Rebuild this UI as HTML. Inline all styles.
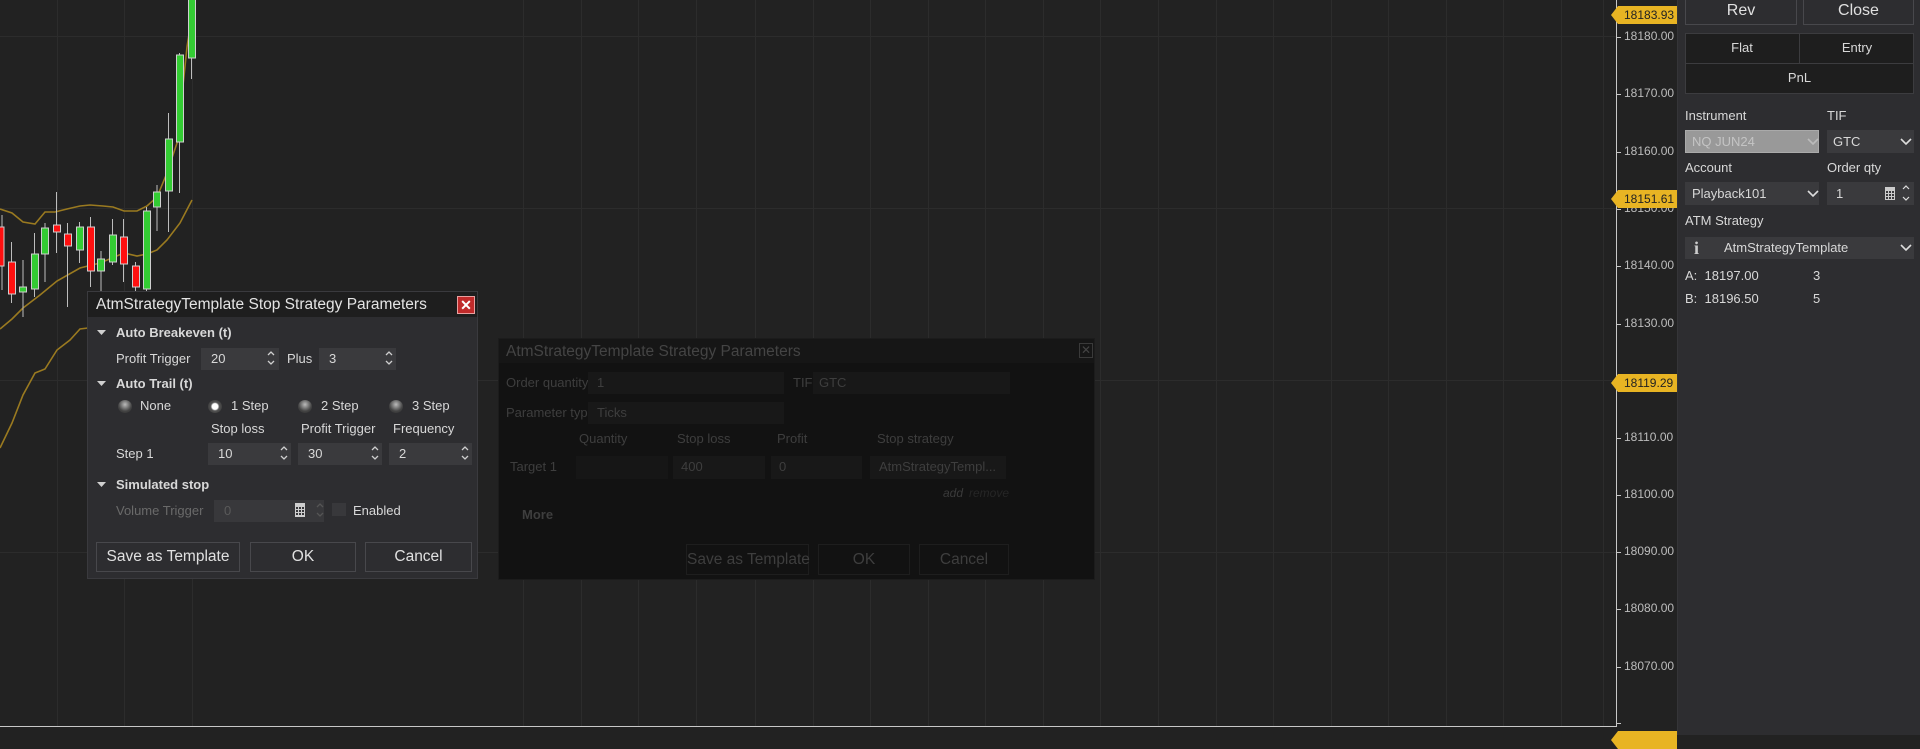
<!DOCTYPE html>
<html><head><meta charset="utf-8"><style>
*{margin:0;padding:0;box-sizing:border-box}
body{width:1920px;height:735px;overflow:hidden;background:#222222;font-family:"Liberation Sans",sans-serif;position:relative;color:#d8d8d8}
.a{position:absolute;white-space:nowrap}
.t{font-size:13px;line-height:16px}
.dlg{position:absolute;background:#2d2d30;border:1px solid #3a3a3e}
.inp{position:absolute;background:#3a3a3d;height:22px}
.btn{position:absolute;border:1px solid #48484c;text-align:center;font-size:15.5px;color:#e0e0e0}
.plab{position:absolute;left:1624px;font-size:12px;color:#bdbdbd}
.ylab{position:absolute;left:1611px;width:66px;height:18px;background:#e8b423;color:#222;font-size:12px;line-height:18px;padding-left:13px;clip-path:polygon(0 50%,7px 0,100% 0,100% 100%,7px 100%)}
.dm{color:#3e3e3e}
</style></head><body>
<svg class="a" style="left:0;top:0" width="1677" height="735">
<g stroke="#2c2c2c" stroke-width="1">
<line x1="57.5" y1="0" x2="57.5" y2="726"/><line x1="124.5" y1="0" x2="124.5" y2="726"/><line x1="192.5" y1="0" x2="192.5" y2="726"/>
<line x1="523.5" y1="0" x2="523.5" y2="726"/><line x1="581.5" y1="0" x2="581.5" y2="726"/><line x1="638.5" y1="0" x2="638.5" y2="726"/>
<line x1="696.5" y1="0" x2="696.5" y2="726"/><line x1="755.5" y1="0" x2="755.5" y2="726"/><line x1="813.5" y1="0" x2="813.5" y2="726"/>
<line x1="870.5" y1="0" x2="870.5" y2="726"/><line x1="928.5" y1="0" x2="928.5" y2="726"/><line x1="985.5" y1="0" x2="985.5" y2="726"/>
<line x1="1043.5" y1="0" x2="1043.5" y2="726"/><line x1="1100.5" y1="0" x2="1100.5" y2="726"/><line x1="1158.5" y1="0" x2="1158.5" y2="726"/>
<line x1="1216.5" y1="0" x2="1216.5" y2="726"/><line x1="1273.5" y1="0" x2="1273.5" y2="726"/><line x1="1331.5" y1="0" x2="1331.5" y2="726"/>
<line x1="1388.5" y1="0" x2="1388.5" y2="726"/><line x1="1446.5" y1="0" x2="1446.5" y2="726"/><line x1="1503.5" y1="0" x2="1503.5" y2="726"/>
<line x1="1561.5" y1="0" x2="1561.5" y2="726"/><line x1="1603.5" y1="0" x2="1603.5" y2="726"/>
<line x1="0" y1="36.5" x2="1616" y2="36.5"/><line x1="0" y1="208.5" x2="1616" y2="208.5"/><line x1="0" y1="380.5" x2="1616" y2="380.5"/><line x1="0" y1="552.5" x2="1616" y2="552.5"/>
</g>
<g fill="none" stroke="#9a7a20" stroke-width="1.6">
<polyline points="0,209 12,213 23,222 35,224 45,212 55,212 67,209 80,206 90,205 103,206 113,207 124,211 137,211 147,206 157,197 167,173 177,143 187,47 192,15"/>
<polyline points="0,329 12,319 23,308 40,295 57,281 80,268 100,263 124,253 137,256 147,254 157,250 167,240 180,223 192,200"/>
<polyline points="0,448 12,423 23,395 35,373 45,369 57,350 70,340 80,329 88,328"/>
</g>
<g stroke="#bdbdbd" stroke-width="1">
<line x1="2" y1="215" x2="2" y2="290"/><line x1="11.5" y1="242" x2="11.5" y2="303"/><line x1="23" y1="260" x2="23" y2="317"/>
<line x1="34.5" y1="233" x2="34.5" y2="297"/><line x1="45" y1="223" x2="45" y2="282"/><line x1="56.5" y1="192" x2="56.5" y2="253"/>
<line x1="67.5" y1="223" x2="67.5" y2="307"/><line x1="79.5" y1="222" x2="79.5" y2="263"/><line x1="90.5" y1="217" x2="90.5" y2="287"/>
<line x1="101" y1="251" x2="101" y2="293"/><line x1="112.5" y1="219" x2="112.5" y2="265"/><line x1="123.5" y1="219" x2="123.5" y2="282"/>
<line x1="135.5" y1="262" x2="135.5" y2="293"/><line x1="146.5" y1="207" x2="146.5" y2="293"/><line x1="157" y1="185" x2="157" y2="231"/>
<line x1="168.5" y1="113" x2="168.5" y2="232"/><line x1="179.5" y1="53" x2="179.5" y2="193"/><line x1="191.5" y1="0" x2="191.5" y2="79"/>
</g>
<g stroke="#cfcfcf" stroke-width="1">
<rect x="-2" y="227" width="6" height="39" fill="#ff1010"/>
<rect x="8.5" y="262" width="7" height="32" fill="#ff1010"/>
<rect x="19.5" y="287" width="7" height="5" fill="#33cc33"/>
<rect x="31.5" y="254" width="7" height="35" fill="#33cc33"/>
<rect x="41.5" y="228" width="7" height="26" fill="#33cc33"/>
<rect x="53.5" y="225" width="7" height="7" fill="#ff1010"/>
<rect x="64.5" y="234" width="7" height="12" fill="#ff1010"/>
<rect x="76.5" y="227" width="7" height="23" fill="#33cc33"/>
<rect x="87.5" y="227" width="7" height="44" fill="#ff1010"/>
<rect x="97.5" y="259" width="7" height="12" fill="#33cc33"/>
<rect x="109.5" y="235" width="7" height="27" fill="#33cc33"/>
<rect x="120.5" y="237" width="7" height="27" fill="#ff1010"/>
<rect x="132.5" y="266" width="7" height="21" fill="#ff1010"/>
<rect x="143.5" y="211" width="7" height="78" fill="#33cc33"/>
<rect x="153.5" y="192" width="7" height="15" fill="#33cc33"/>
<rect x="165.5" y="139" width="7" height="52" fill="#33cc33"/>
<rect x="176.5" y="55" width="7" height="87" fill="#33cc33"/>
<rect x="188.5" y="-2" width="7" height="60" fill="#33cc33"/>
</g>
<line x1="0" y1="726.5" x2="1616" y2="726.5" stroke="#c8c8c8"/>
<line x1="1616.5" y1="0" x2="1616.5" y2="727" stroke="#c8c8c8"/>
<g stroke="#c8c8c8"><line x1="1616" y1="37.5" x2="1621" y2="37.5"/><line x1="1616" y1="94.5" x2="1621" y2="94.5"/><line x1="1616" y1="152.5" x2="1621" y2="152.5"/><line x1="1616" y1="209.5" x2="1621" y2="209.5"/><line x1="1616" y1="266.5" x2="1621" y2="266.5"/><line x1="1616" y1="324.5" x2="1621" y2="324.5"/><line x1="1616" y1="381.5" x2="1621" y2="381.5"/><line x1="1616" y1="438.5" x2="1621" y2="438.5"/><line x1="1616" y1="495.5" x2="1621" y2="495.5"/><line x1="1616" y1="552.5" x2="1621" y2="552.5"/><line x1="1616" y1="609.5" x2="1621" y2="609.5"/><line x1="1616" y1="667.5" x2="1621" y2="667.5"/><line x1="1616" y1="723.5" x2="1621" y2="723.5"/></g>
</svg>
<div class="plab" style="top:29px">18180.00</div>
<div class="plab" style="top:86px">18170.00</div>
<div class="plab" style="top:144px">18160.00</div>
<div class="plab" style="top:201px">18150.00</div>
<div class="plab" style="top:258px">18140.00</div>
<div class="plab" style="top:316px">18130.00</div>
<div class="plab" style="top:373px">18120.00</div>
<div class="plab" style="top:430px">18110.00</div>
<div class="plab" style="top:487px">18100.00</div>
<div class="plab" style="top:544px">18090.00</div>
<div class="plab" style="top:601px">18080.00</div>
<div class="plab" style="top:659px">18070.00</div>
<div class="ylab" style="top:6px">18183.93</div>
<div class="ylab" style="top:190px">18151.61</div>
<div class="ylab" style="top:374px">18119.29</div>
<div class="ylab" style="top:731px"></div>

<!-- dim dialog -->
<div class="a" style="left:498px;top:338px;width:597px;height:242px;background:#121212;border:1px solid #1c1c1c">
 <div class="a" style="left:0;top:0;width:595px;height:24px;background:#161616"></div>
 <div class="a" style="left:7px;top:4px;font-size:15.5px;color:#444">AtmStrategyTemplate Strategy Parameters</div>
 <div class="a" style="left:580px;top:4px;width:14px;height:15px;border:1px solid #3a3a3a;color:#444;font-size:12px;text-align:center;line-height:13px">✕</div>
 <div class="a t dm" style="left:7px;top:36px">Order quantity</div>
 <div class="a" style="left:89px;top:33px;width:196px;height:22px;background:#181818"></div>
 <div class="a t dm" style="left:98px;top:36px">1</div>
 <div class="a t dm" style="left:294px;top:36px">TIF</div>
 <div class="a" style="left:314px;top:33px;width:197px;height:22px;background:#181818"></div>
 <div class="a t dm" style="left:320px;top:36px">GTC</div>
 <div class="a t dm" style="left:7px;top:66px">Parameter type</div>
 <div class="a" style="left:89px;top:63px;width:196px;height:22px;background:#181818"></div>
 <div class="a t dm" style="left:98px;top:66px">Ticks</div>
 <div class="a t dm" style="left:80px;top:92px">Quantity</div>
 <div class="a t dm" style="left:178px;top:92px">Stop loss</div>
 <div class="a t dm" style="left:278px;top:92px">Profit</div>
 <div class="a t dm" style="left:378px;top:92px">Stop strategy</div>
 <div class="a t dm" style="left:11px;top:120px">Target 1</div>
 <div class="a" style="left:77px;top:117px;width:92px;height:23px;background:#161616"></div>
 <div class="a" style="left:174px;top:117px;width:92px;height:23px;background:#181818"></div>
 <div class="a t dm" style="left:182px;top:120px">400</div>
 <div class="a" style="left:272px;top:117px;width:91px;height:23px;background:#181818"></div>
 <div class="a t dm" style="left:280px;top:120px">0</div>
 <div class="a" style="left:371px;top:117px;width:136px;height:23px;background:#181818"></div>
 <div class="a t dm" style="left:380px;top:120px">AtmStrategyTempl...</div>
 <div class="a t" style="left:444px;top:146px;color:#3a3a3a;font-style:italic;font-size:12px">add</div>
 <div class="a t" style="left:470px;top:146px;color:#262626;font-style:italic;font-size:12px">remove</div>
 <div class="a t dm" style="left:23px;top:168px;font-weight:bold">More</div>
 <div class="a" style="left:187px;top:205px;width:123px;height:31px;border:1px solid #1e1e1e;color:#3e3e3e;font-size:15.5px;text-align:center;line-height:29px">Save as Template</div>
 <div class="a" style="left:319px;top:205px;width:92px;height:31px;border:1px solid #1e1e1e;color:#3e3e3e;font-size:15.5px;text-align:center;line-height:29px">OK</div>
 <div class="a" style="left:420px;top:205px;width:90px;height:31px;border:1px solid #1e1e1e;color:#3e3e3e;font-size:15.5px;text-align:center;line-height:29px">Cancel</div>
</div>

<!-- main dialog -->
<div class="dlg" style="left:87px;top:291px;width:391px;height:288px">
 <div class="a" style="left:0;top:0;width:389px;height:25px;background:#1e1e1e"></div>
 <div class="a" style="left:8px;top:4px;font-size:15.5px;color:#e4e4e4">AtmStrategyTemplate Stop Strategy Parameters</div>
 <div class="a" style="left:369px;top:4px;width:18px;height:18px;background:#c02a2a;border:1px solid #e8a0a0;color:#fff;font-size:14px;font-weight:bold;text-align:center;line-height:16px">✕</div>
 <svg class="a" style="left:9px;top:37px" width="10" height="8"><path d="M0 1h9L4.5 6z" fill="#d0d0d0"/></svg>
 <div class="a t" style="left:28px;top:33px;font-weight:bold">Auto Breakeven (t)</div>
 <div class="a t" style="left:28px;top:59px">Profit Trigger</div>
 <div class="inp" style="left:113px;top:56px;width:78px"></div><div class="a t" style="left:123px;top:59px">20</div>
 <div class="a t" style="left:199px;top:59px">Plus</div>
 <div class="inp" style="left:231px;top:56px;width:77px"></div><div class="a t" style="left:241px;top:59px">3</div>
 <svg class="a" style="left:9px;top:88px" width="10" height="8"><path d="M0 1h9L4.5 6z" fill="#d0d0d0"/></svg>
 <div class="a t" style="left:28px;top:84px;font-weight:bold">Auto Trail (t)</div>
 <div class="a" style="left:30px;top:108px;width:14px;height:13px;border-radius:50%;background:radial-gradient(circle at 50% 35%,#bbb,#444 60%,#2a2a2a)"></div>
 <div class="a t" style="left:52px;top:106px">None</div>
 <div class="a" style="left:120px;top:108px;width:14px;height:13px;border-radius:50%;background:radial-gradient(circle at 50% 50%,#fff 30%,#555 45%,#2a2a2a)"></div>
 <div class="a t" style="left:143px;top:106px">1 Step</div>
 <div class="a" style="left:210px;top:108px;width:14px;height:13px;border-radius:50%;background:radial-gradient(circle at 50% 35%,#bbb,#444 60%,#2a2a2a)"></div>
 <div class="a t" style="left:233px;top:106px">2 Step</div>
 <div class="a" style="left:301px;top:108px;width:14px;height:13px;border-radius:50%;background:radial-gradient(circle at 50% 35%,#bbb,#444 60%,#2a2a2a)"></div>
 <div class="a t" style="left:324px;top:106px">3 Step</div>
 <div class="a t" style="left:123px;top:129px">Stop loss</div>
 <div class="a t" style="left:213px;top:129px">Profit Trigger</div>
 <div class="a t" style="left:305px;top:129px">Frequency</div>
 <div class="a t" style="left:28px;top:154px">Step 1</div>
 <div class="inp" style="left:120px;top:151px;width:83px"></div><div class="a t" style="left:130px;top:154px">10</div>
 <div class="inp" style="left:210px;top:151px;width:84px"></div><div class="a t" style="left:220px;top:154px">30</div>
 <div class="inp" style="left:301px;top:151px;width:83px"></div><div class="a t" style="left:311px;top:154px">2</div>
 <svg class="a" style="left:9px;top:189px" width="10" height="8"><path d="M0 1h9L4.5 6z" fill="#d0d0d0"/></svg>
 <div class="a t" style="left:28px;top:185px;font-weight:bold">Simulated stop</div>
 <div class="a t" style="left:28px;top:211px;color:#6a6a6a">Volume Trigger</div>
 <div class="inp" style="left:126px;top:208px;width:110px;background:#38383b"></div><div class="a t" style="left:136px;top:211px;color:#5a5a5a">0</div>
 <div class="a" style="left:244px;top:211px;width:14px;height:13px;background:#38383b"></div>
 <div class="a t" style="left:265px;top:211px">Enabled</div>
 <div class="btn" style="left:8px;top:250px;width:144px;height:30px;line-height:28px">Save as Template</div>
 <div class="btn" style="left:162px;top:250px;width:106px;height:30px;line-height:28px">OK</div>
 <div class="btn" style="left:277px;top:250px;width:107px;height:30px;line-height:28px">Cancel</div>
 <svg class="a" style="left:0;top:0" width="391" height="288" fill="none" stroke="#cfcfcf" stroke-width="1.3">
  <path d="M180 63l3-3 3 3M180 69l3 3 3-3M298 63l3-3 3 3M298 69l3 3 3-3M193 158l3-3 3 3M193 164l3 3 3-3M284 158l3-3 3 3M284 164l3 3 3-3M374 158l3-3 3 3M374 164l3 3 3-3"/>
  <path d="M229 215l3-3 3 3M229 221l3 3 3-3" stroke="#555"/>
  <g fill="#cfcfcf" stroke="none"><rect x="207" y="211" width="10" height="14"/></g>
  <g fill="#38383b" stroke="none"><rect x="208" y="215" width="2" height="2"/><rect x="211" y="215" width="2" height="2"/><rect x="214" y="215" width="2" height="2"/><rect x="208" y="218" width="2" height="2"/><rect x="211" y="218" width="2" height="2"/><rect x="214" y="218" width="2" height="2"/><rect x="208" y="221" width="2" height="2"/><rect x="211" y="221" width="2" height="2"/><rect x="214" y="221" width="2" height="2"/></g>
 </svg>
</div>

<!-- right panel -->
<div class="a" style="left:1677px;top:0;width:243px;height:735px;background:#2d2d30;border-left:1px solid #353538"></div>
<div class="btn" style="left:1685px;top:-2px;width:112px;height:27px;line-height:24px;font-size:16px">Rev</div>
<div class="btn" style="left:1803px;top:-2px;width:111px;height:27px;line-height:24px;font-size:16px">Close</div>
<div class="a" style="left:1685px;top:33px;width:229px;height:61px;background:#1e1e1e;border:1px solid #3c3c3f"></div>
<div class="a" style="left:1685px;top:63px;width:229px;height:1px;background:#3c3c3f"></div>
<div class="a" style="left:1799px;top:33px;width:1px;height:30px;background:#3c3c3f"></div>
<div class="a t" style="left:1685px;top:40px;width:114px;text-align:center">Flat</div>
<div class="a t" style="left:1800px;top:40px;width:114px;text-align:center">Entry</div>
<div class="a t" style="left:1685px;top:70px;width:229px;text-align:center">PnL</div>
<div class="a t" style="left:1685px;top:108px">Instrument</div>
<div class="a t" style="left:1827px;top:108px">TIF</div>
<div class="a" style="left:1685px;top:130px;width:134px;height:23px;background:#999;border:1px solid #aaa"></div>
<div class="a t" style="left:1692px;top:134px;color:#c4c4c4">NQ JUN24</div>
<div class="a" style="left:1827px;top:130px;width:87px;height:23px;background:#3a3a3d"></div>
<div class="a t" style="left:1833px;top:134px">GTC</div>
<div class="a t" style="left:1685px;top:160px">Account</div>
<div class="a t" style="left:1827px;top:160px">Order qty</div>
<div class="a" style="left:1685px;top:182px;width:134px;height:23px;background:#3a3a3d"></div>
<div class="a t" style="left:1692px;top:186px">Playback101</div>
<div class="a" style="left:1827px;top:182px;width:87px;height:23px;background:#3a3a3d"></div>
<div class="a t" style="left:1836px;top:186px">1</div>
<div class="a t" style="left:1685px;top:213px">ATM Strategy</div>
<div class="a" style="left:1685px;top:237px;width:229px;height:22px;background:#3a3a3d"></div>
<div class="a" style="left:1694px;top:238px;font-family:'Liberation Serif',serif;font-size:18px;font-weight:bold;color:#ccc">i</div>
<div class="a t" style="left:1724px;top:240px">AtmStrategyTemplate</div>
<div class="a t" style="left:1685px;top:268px">A:&nbsp; 18197.00</div>
<div class="a t" style="left:1813px;top:268px">3</div>
<div class="a t" style="left:1685px;top:291px">B:&nbsp; 18196.50</div>
<div class="a t" style="left:1813px;top:291px">5</div>
<svg class="a" style="left:1677px;top:0" width="243" height="270" fill="none" stroke="#aaa" stroke-width="1.6">
 <path d="M131 139l5 5 5-5" stroke="#bbb"/>
 <path d="M224 139l5 5 5-5" stroke="#ddd"/>
 <path d="M131 191l5 5 5-5" stroke="#ddd"/>
 <path d="M224 245l5 5 5-5" stroke="#ddd"/>
 <path d="M226 189l3-3 3 3M226 197l3 3 3-3" stroke="#ddd" stroke-width="1.2"/>
 <rect x="208" y="187" width="10" height="13" fill="#ccc" stroke="none"/>
 <g fill="#3a3a3d" stroke="none"><rect x="209" y="191" width="2" height="2"/><rect x="212" y="191" width="2" height="2"/><rect x="215" y="191" width="2" height="2"/><rect x="209" y="194" width="2" height="2"/><rect x="212" y="194" width="2" height="2"/><rect x="215" y="194" width="2" height="2"/><rect x="209" y="197" width="2" height="2"/><rect x="212" y="197" width="2" height="2"/><rect x="215" y="197" width="2" height="2"/></g>
</svg>
</body></html>
